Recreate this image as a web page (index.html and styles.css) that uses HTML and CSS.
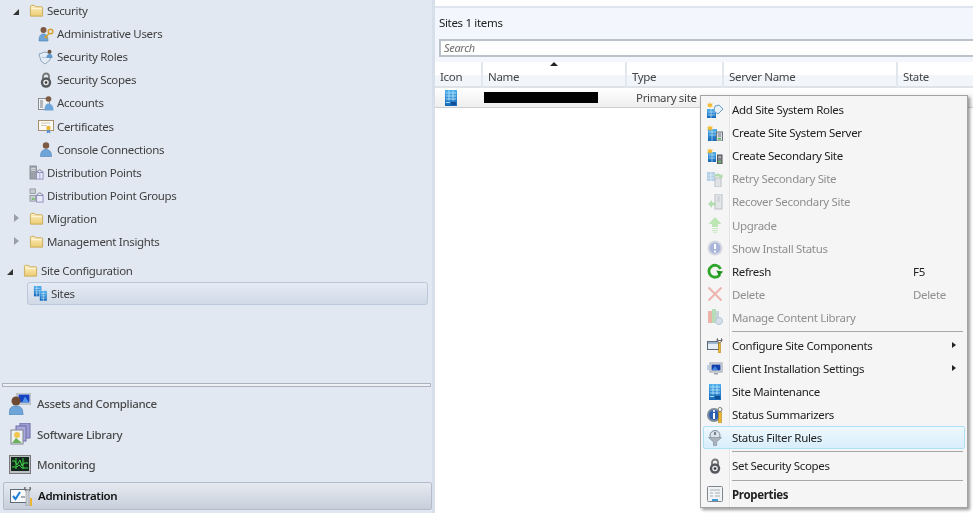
FILE: index.html
```html
<!DOCTYPE html>
<html lang="en">
<head>
    <meta charset="UTF-8">
    <title>Sites - Administration</title>
    <link rel="stylesheet" href="styles.css">
</head>
<body>
    <svg class="sprite" width="0" height="0" aria-hidden="true">
        <defs>
            <linearGradient id="folderFill" x1="0" y1="0" x2="0" y2="1">
                <stop offset="0" stop-color="#fdf0c0"/>
                <stop offset="1" stop-color="#eccb72"/>
            </linearGradient>
            <linearGradient id="blueFill" x1="0" y1="0" x2="0" y2="1">
                <stop offset="0" stop-color="#4fb0ee"/>
                <stop offset="1" stop-color="#1668b8"/>
            </linearGradient>

            <symbol id="i-folder" viewBox="0 0 16 16">
                <path d="M1.5 14V3.5q0-1 1-1h3.5l1 1.5h6.500q1 0 1 1V14z" fill="url(#folderFill)" stroke="#c9ac5e"/>
                <path d="M2.500 6h11" stroke="#fff8df"/>
            </symbol>
            <symbol id="i-user" viewBox="0 0 16 16">
                <circle cx="8" cy="4.500" r="3.200" fill="#7d5a44"/>
                <path d="M2.500 15.500c0-5 2-7 5.500-7s5.500 2 5.500 7z" fill="#6ea5d8" stroke="#4b7fb2" stroke-width=".6"/>
            </symbol>
            <symbol id="i-admin" viewBox="0 0 16 16">
                <circle cx="5.500" cy="4" r="3" fill="#7d5a44"/>
                <path d="M1 15c0-5 1.500-7 4.500-7s4.500 2 4.500 7z" fill="#6ea5d8" stroke="#4b7fb2" stroke-width=".6"/>
                <circle cx="12.500" cy="5.500" r="2.300" fill="none" stroke="#d9a02c" stroke-width="1.500"/>
                <path d="M11 7.500l-4.500 4.500M8 11l1.500 1.500" stroke="#d9a02c" stroke-width="1.500"/>
            </symbol>
            <symbol id="i-roles" viewBox="0 0 16 16">
                <path d="M1 5l6-2 6 2-1 6-5 4-4-3z" fill="#e4edf6" stroke="#8fa6bd"/>
                <path d="M4 8l3 1 4-3" fill="none" stroke="#a9c3dc"/>
                <circle cx="11.500" cy="2.800" r="2" fill="#6b5140"/>
                <path d="M8.500 9c0-3 1.200-4 3-4s3 1 3 4z" fill="#5f97cc"/>
            </symbol>
            <symbol id="i-lock" viewBox="0 0 16 16">
                <path d="M5 7V4.500a3 3 0 0 1 6 0V7" fill="none" stroke="#777" stroke-width="1.800"/>
                <circle cx="8" cy="10.500" r="5.200" fill="#55585c"/>
                <circle cx="8" cy="10.500" r="2.800" fill="#e8e8e8"/>
                <circle cx="8" cy="10.500" r="1.300" fill="#333"/>
            </symbol>
            <symbol id="i-accounts" viewBox="0 0 16 16">
                <rect x=".5" y="3.500" width="11" height="11" fill="#eef0f2" stroke="#8a8f96"/>
                <path d="M2 6h3M2 8h3M2 10h3M2 12h3" stroke="#7a8087"/>
                <circle cx="10.500" cy="4" r="2.800" fill="#7d5a44"/>
                <path d="M6.500 15.500c0-5 1.500-7 4-7s5 2 5 7z" fill="#6ea5d8"/>
            </symbol>
            <symbol id="i-cert" viewBox="0 0 16 16">
                <rect x=".5" y="2.500" width="15" height="10" fill="#fbfaf4" stroke="#a58f6c"/>
                <path d="M3 5h9M3 7.500h6" stroke="#cfc8b4"/>
                <path d="M9.500 11.500l-1 4 2-1 2 1-1-4z" fill="#4f8fd6"/>
                <circle cx="10.500" cy="10" r="2.200" fill="#e8b637"/>
            </symbol>
            <symbol id="i-dp" viewBox="0 0 16 16">
                <rect x="1" y="1" width="7" height="14" fill="#9aa1a8" stroke="#6f767d" stroke-width=".6"/>
                <path d="M2 3.500h5M2 5.500h5" stroke="#e8ecef"/>
                <rect x="8" y="8" width="7" height="7" fill="#e8e9f8" stroke="#8f8fc0"/>
                <path d="M8 7.500l3.500-2.500 3.500 2.500" fill="none" stroke="#7a7f8c"/>
                <path d="M11.500 8v7" stroke="#a9a9d6"/>
            </symbol>
            <symbol id="i-dpg" viewBox="0 0 16 16">
                <rect x="1" y="1" width="6" height="5" fill="#c7ccd1" stroke="#6f767d" stroke-width=".6"/>
                <rect x="1" y="8" width="6" height="6" fill="#c7ccd1" stroke="#6f767d" stroke-width=".6"/>
                <rect x="3" y="11" width="3" height="1.500" fill="#5bc04b"/>
                <rect x="8" y="8" width="7" height="7" fill="#e8e9f8" stroke="#8f8fc0"/>
                <path d="M8 7.500l3.500-2.500 3.500 2.500" fill="none" stroke="#7a7f8c"/>
            </symbol>
            <symbol id="i-sites" viewBox="0 0 16 16">
                <rect x="1" y="0" width="8" height="11" fill="url(#blueFill)"/>
                <rect x="7" y="5" width="8" height="11" fill="url(#blueFill)" stroke="#d6e8f7" stroke-width=".5"/>
                <path d="M2 2.500h6M2 5h4M2 7.500h4M8.500 8h5M8.500 10.500h5M8.500 13h5M4 0v11M11 5v11" stroke="#bfe2f8" stroke-width=".7"/>
            </symbol>
            <symbol id="i-site" viewBox="0 0 16 16">
                <rect x="2" y="0" width="12" height="16" fill="url(#blueFill)"/>
                <path d="M3 3h10M3 6h10M3 9h10M6 .5v10M10 .5v10" stroke="#a8dcf8"/>
                <rect x="8" y="12" width="5" height="3" fill="#0e4f96"/>
                <rect x="3" y="12" width="4" height="1" fill="#a8dcf8"/>
            </symbol>
            <symbol id="i-addroles" viewBox="0 0 16 16">
                <rect x="0" y="7" width="9" height="9" fill="url(#blueFill)"/>
                <path d="M1 10h7M1 13h7M4 7v9" stroke="#bfe2f8" stroke-width=".7"/>
                <path d="M8 4l4-1 4 4-5 5-4-3z" fill="#e6f1fa" stroke="#6c9cc6"/>
                <path d="M3 0l.8 2 2.200-.5-1.200 1.800 1.200 1.700-2.200-.5L3 6.500 2.200 4.500 0 5l1.200-1.700L0 1.500l2.200.5z" fill="#f4b92f"/>
            </symbol>
            <symbol id="i-newserver" viewBox="0 0 16 16">
                <rect x="1" y="4" width="9" height="12" fill="url(#blueFill)"/>
                <path d="M2 7h7M2 10h7M5 4v12" stroke="#bfe2f8" stroke-width=".7"/>
                <rect x="9.500" y="7" width="6" height="9" fill="#d9dde2" stroke="#6f767d"/>
                <path d="M11 9h3M11 11h3" stroke="#6f767d"/>
                <rect x="11" y="13" width="3" height="1.500" fill="#4bb84a"/>
                <path d="M3 0l.8 2 2.200-.5-1.200 1.800 1.200 1.700-2.200-.5L3 6.500 2.200 4.500 0 5l1.200-1.700L0 1.500l2.200.5z" fill="#f4b92f"/>
            </symbol>
            <symbol id="i-secondary" viewBox="0 0 16 16">
                <rect x="1" y="4" width="8" height="10" fill="url(#blueFill)"/>
                <path d="M2 7h6M2 10h6M5 4v10" stroke="#bfe2f8" stroke-width=".7"/>
                <rect x="10.500" y="7" width="4.500" height="9" fill="#7d848b" stroke="#555"/>
                <path d="M11.500 9h2.500" stroke="#ddd"/>
                <rect x="11.500" y="13" width="2.500" height="1.500" fill="#5bd04b"/>
                <path d="M3 0l.8 2 2.200-.5-1.200 1.800 1.200 1.700-2.200-.5L3 6.500 2.200 4.500 0 5l1.200-1.700L0 1.500l2.200.5z" fill="#f4b92f"/>
            </symbol>
            <symbol id="i-retry" viewBox="0 0 16 16">
                <rect x="0" y="1" width="8" height="9" fill="#b5cfe4"/>
                <path d="M1 4h6M1 7h6M4 1v9" stroke="#e4eff8" stroke-width=".7"/>
                <rect x="8" y="7" width="6" height="9" fill="#dfe3e6" stroke="#bcc2c8"/>
                <path d="M7 4q4-3 7 0l1.500-1v4h-4l1-1q-2-1.500-4 0z" fill="#b3dcb0"/>
            </symbol>
            <symbol id="i-recover" viewBox="0 0 16 16">
                <rect x="8" y="0" width="7" height="15" fill="#e3e6e9" stroke="#bcc2c8"/>
                <path d="M10 3h3M10 5h3M10 7h3" stroke="#c3c8cd"/>
                <path d="M1 10l4-4v2.500h4v3H5V14z" fill="#b3dcb0"/>
            </symbol>
            <symbol id="i-upgrade" viewBox="0 0 16 16">
                <path d="M8 0l6.500 7H11v3H5V7H1.500z" fill="#bde6b4"/>
                <path d="M5 11.500h6M5 13.500h6M6 15.300h4" stroke="#c8ebc1"/>
            </symbol>
            <symbol id="i-status" viewBox="0 0 16 16">
                <circle cx="8" cy="8" r="7.500" fill="#d4d7e2"/>
                <circle cx="8" cy="8" r="5.500" fill="#a9b6da"/>
                <path d="M8 4v5" stroke="#fff" stroke-width="2"/>
                <circle cx="8" cy="11.500" r="1.100" fill="#fff"/>
            </symbol>
            <symbol id="i-refresh" viewBox="0 0 16 16">
                <path d="M13 11.500A6 6 0 1 1 13.500 6" fill="none" stroke="#2fa52a" stroke-width="2.800"/>
                <path d="M9 8h7l-3.500 5z" fill="#1f8f1e" transform="rotate(8 12 10)"/>
            </symbol>
            <symbol id="i-delete" viewBox="0 0 16 16">
                <path d="M1.500 1.500l13 13M14.500 1.500l-13 13" stroke="#eeb4ae" stroke-width="2"/>
            </symbol>
            <symbol id="i-library" viewBox="0 0 16 16">
                <rect x="1" y="2" width="4" height="12" fill="#eab4a8"/>
                <rect x="5" y="0" width="4" height="14" fill="#b7dcb8"/>
                <rect x="9" y="2" width="3" height="9" fill="#c8d2dc"/>
                <circle cx="12" cy="12" r="3.500" fill="#d5e0ec" stroke="#b5c4d4"/>
            </symbol>
            <symbol id="i-config" viewBox="0 0 16 16">
                <rect x=".5" y="4.500" width="11" height="8" fill="#e6edf4" stroke="#5e6a76"/>
                <rect x="1" y="5" width="10" height="2" fill="#9db7d1"/>
                <path d="M10.500 1.500a2.500 2.500 0 1 0 4 0v2h-4z" fill="#fff" stroke="#666"/>
                <rect x="11.500" y="6" width="2" height="10" fill="#eeb62e" stroke="#a87c12" stroke-width=".5"/>
            </symbol>
            <symbol id="i-client" viewBox="0 0 16 16">
                <rect x="3" y="2" width="12" height="9" fill="#f0f2f4" stroke="#9aa1a8"/>
                <rect x="4.500" y="3.500" width="9" height="6" fill="#143fa8"/>
                <path d="M5 9l3-4 3 4z" fill="#3d86e0"/>
                <path d="M7 12h4v1.500H7z" fill="#9aa1a8"/>
                <path d="M0 4h2v5H0z" fill="#bcd2e6"/>
            </symbol>
            <symbol id="i-summary" viewBox="0 0 16 16">
                <circle cx="7" cy="8" r="7" fill="#7e8b9c"/>
                <circle cx="7" cy="8" r="5" fill="#2c5fb3"/>
                <path d="M7 6v6" stroke="#fff" stroke-width="2"/>
                <circle cx="7" cy="4" r="1.100" fill="#fff"/>
                <circle cx="13" cy="2.500" r="2" fill="#fff" stroke="#777"/>
                <rect x="11.500" y="5" width="3" height="11" fill="#eeb62e" stroke="#a87c12" stroke-width=".5"/>
            </symbol>
            <symbol id="i-filter" viewBox="0 0 16 16">
                <circle cx="8" cy="5.500" r="5" fill="#dbe3ea" stroke="#7e8a96"/>
                <path d="M8 2v3" stroke="#55606c" stroke-width="1.500"/>
                <path d="M1.500 7.500h13L9.500 12v3.500h-3V12z" fill="#a9b3bd" stroke="#7e8a96" stroke-width=".6"/>
            </symbol>
            <symbol id="i-props" viewBox="0 0 16 16">
                <rect x=".5" y=".5" width="15" height="15" rx="1" fill="#f0f2f4" stroke="#7f868d"/>
                <path d="M3 4h10M3 7h3M8 7h5M3 10h3M8 10h5" stroke="#a8b0b8"/>
                <rect x="5" y="13" width="6" height="2" fill="#3f9bd8"/>
            </symbol>
            <symbol id="i-assets" viewBox="0 0 22 22">
                <rect x="8" y="0" width="14" height="11" fill="#e8eaec" stroke="#9aa1a8"/>
                <rect x="9.500" y="1.500" width="11" height="8" fill="#1542c0"/>
                <path d="M13 9.500l3-6 4 6z" fill="#4f94ea"/>
                <circle cx="7" cy="8" r="4.500" fill="#6e4a32"/>
                <path d="M0 22c0-7 2-9 7-9s7 2 7 9z" fill="#6ea5d8" stroke="#4f82b4" stroke-width=".6"/>
            </symbol>
            <symbol id="i-library-nav" viewBox="0 0 22 22">
                <rect x="11" y="0" width="10" height="15" fill="#9c9cd2" stroke="#6c6ca8"/>
                <rect x="7" y="3" width="10" height="15" fill="#a9a9da" stroke="#6c6ca8"/>
                <rect x="2" y="7" width="12" height="14" fill="#eff0f2" stroke="#7d8590"/>
                <circle cx="8" cy="12" r="3" fill="#f0c64e"/>
                <path d="M3 20l4-5 6 5z" fill="#68b25a"/>
            </symbol>
            <symbol id="i-monitoring" viewBox="0 0 22 22">
                <rect x=".5" y="1.500" width="21" height="18" fill="#bcc0c4" stroke="#777"/>
                <rect x="2" y="3" width="18" height="14" fill="#13281a"/>
                <path d="M3 7h3l2 4 3-5 2 6 2-3h4M3 13h5l2-2 3 3h6M7 4v11M14 4v11" fill="none" stroke="#3fd04a"/>
            </symbol>
            <symbol id="i-admin-nav" viewBox="0 0 22 22">
                <rect x=".5" y="5.500" width="16" height="13" fill="#f6f8fa" stroke="#5e6a76"/>
                <path d="M3 12l2.500 3L10 8" fill="none" stroke="#1c7fd8" stroke-width="2"/>
                <path d="M11 13h4" stroke="#8a939c" stroke-width="1.500"/>
                <path d="M15 3a3 3 0 1 0 5 0v3h-5z" fill="#eceef0" stroke="#6a6f75"/>
                <rect x="16" y="6" width="3" height="16" fill="#cdd1d6" stroke="#7d8288" stroke-width=".5"/>
                <rect x="20" y="14" width="2" height="8" fill="#eeb62e"/>
            </symbol>
        </defs>
    </svg>

    <div class="sidebar">
        <ul class="tree">
            <li class="tree-row level-1"><span class="arrow open"></span><svg class="tree-icon folder"><use href="#i-folder"/></svg>Security</li>
            <li class="tree-row level-2"><svg class="tree-icon"><use href="#i-admin"/></svg>Administrative Users</li>
            <li class="tree-row level-2"><svg class="tree-icon"><use href="#i-roles"/></svg>Security Roles</li>
            <li class="tree-row level-2"><svg class="tree-icon"><use href="#i-lock"/></svg>Security Scopes</li>
            <li class="tree-row level-2"><svg class="tree-icon"><use href="#i-accounts"/></svg>Accounts</li>
            <li class="tree-row level-2"><svg class="tree-icon"><use href="#i-cert"/></svg>Certificates</li>
            <li class="tree-row level-2"><svg class="tree-icon"><use href="#i-user"/></svg>Console Connections</li>
            <li class="tree-row level-1b"><svg class="tree-icon folder"><use href="#i-dp"/></svg>Distribution Points</li>
            <li class="tree-row level-1b"><svg class="tree-icon folder"><use href="#i-dpg"/></svg>Distribution Point Groups</li>
            <li class="tree-row level-1"><span class="arrow closed"></span><svg class="tree-icon folder"><use href="#i-folder"/></svg>Migration</li>
            <li class="tree-row level-1"><span class="arrow closed"></span><svg class="tree-icon folder"><use href="#i-folder"/></svg>Management Insights</li>
            <li class="tree-row level-0"><span class="arrow open"></span><svg class="tree-icon folder"><use href="#i-folder"/></svg>Site Configuration</li>
            <li class="tree-row selected"><svg class="tree-icon folder"><use href="#i-sites"/></svg>Sites</li>
        </ul>

        <div class="nav">
            <div class="nav-grip"></div>
            <div class="nav-row"><svg class="nav-icon"><use href="#i-assets"/></svg>Assets and Compliance</div>
            <div class="nav-row"><svg class="nav-icon"><use href="#i-library-nav"/></svg>Software Library</div>
            <div class="nav-row"><svg class="nav-icon"><use href="#i-monitoring"/></svg>Monitoring</div>
            <div class="nav-row active"><svg class="nav-icon"><use href="#i-admin-nav"/></svg>Administration</div>
        </div>
    </div>

    <div class="content">
        <div class="list-title">Sites 1 items</div>
        <div class="search-band">
            <div class="search-box">Search</div>
        </div>
        <div class="grid-head">
            <div class="col col-icon">Icon</div>
            <div class="col col-name"><span class="sort-mark"></span>Name</div>
            <div class="col col-type">Type</div>
            <div class="col col-server">Server Name</div>
            <div class="col col-state">State</div>
        </div>
        <div class="grid-row">
            <div class="cell col-icon"><svg class="site-icon"><use href="#i-site"/></svg></div>
            <div class="cell col-name"><span class="redacted"></span></div>
            <div class="cell col-type type-cell">Primary site</div>
        </div>
    </div>

    <div class="menu">
        <div class="menu-item"><svg class="menu-icon"><use href="#i-addroles"/></svg><span>Add Site System Roles</span></div>
        <div class="menu-item"><svg class="menu-icon"><use href="#i-newserver"/></svg><span>Create Site System Server</span></div>
        <div class="menu-item"><svg class="menu-icon"><use href="#i-secondary"/></svg><span>Create Secondary Site</span></div>
        <div class="menu-item disabled"><svg class="menu-icon"><use href="#i-retry"/></svg><span>Retry Secondary Site</span></div>
        <div class="menu-item disabled"><svg class="menu-icon"><use href="#i-recover"/></svg><span>Recover Secondary Site</span></div>
        <div class="menu-item disabled"><svg class="menu-icon"><use href="#i-upgrade"/></svg><span>Upgrade</span></div>
        <div class="menu-item disabled"><svg class="menu-icon"><use href="#i-status"/></svg><span>Show Install Status</span></div>
        <div class="menu-item"><svg class="menu-icon"><use href="#i-refresh"/></svg><span>Refresh</span><span class="shortcut">F5</span></div>
        <div class="menu-item disabled"><svg class="menu-icon"><use href="#i-delete"/></svg><span>Delete</span><span class="shortcut">Delete</span></div>
        <div class="menu-item disabled"><svg class="menu-icon"><use href="#i-library"/></svg><span>Manage Content Library</span></div>
        <div class="menu-sep"></div>
        <div class="menu-item"><svg class="menu-icon"><use href="#i-config"/></svg><span>Configure Site Components</span><span class="submenu"></span></div>
        <div class="menu-item"><svg class="menu-icon"><use href="#i-client"/></svg><span>Client Installation Settings</span><span class="submenu"></span></div>
        <div class="menu-item"><svg class="menu-icon"><use href="#i-site"/></svg><span>Site Maintenance</span></div>
        <div class="menu-item"><svg class="menu-icon"><use href="#i-summary"/></svg><span>Status Summarizers</span></div>
        <div class="menu-item hover"><svg class="menu-icon"><use href="#i-filter"/></svg><span>Status Filter Rules</span></div>
        <div class="menu-sep"></div>
        <div class="menu-item"><svg class="menu-icon"><use href="#i-lock"/></svg><span>Set Security Scopes</span></div>
        <div class="menu-sep"></div>
        <div class="menu-item strong"><svg class="menu-icon"><use href="#i-props"/></svg><span>Properties</span></div>
    </div>
</body>
</html>
```

FILE: styles.css
```css
* {
    box-sizing: border-box;
    margin: 0;
    padding: 0;
}

html, body {
    height: 100%;
    overflow: hidden;
    font-family: "Noto Sans", "Open Sans", sans-serif;
    font-size: 11.5px;
    letter-spacing: -0.33px;
    color: #3f3f3f;
    background-color: #ffffff;
}

body {
    display: flex;
    filter: blur(0.3px);
}

.sprite {
    position: absolute;
}

/* Left side */
.sidebar {
    width: 435px;
    height: 513px;
    flex-shrink: 0;
    display: flex;
    flex-direction: column;
    justify-content: space-between;
    background-color: #e1e8f2;
    border-right: 3px solid #d7dfea;
}

.tree {
    list-style: none;
    margin-top: -1px;
}

.tree-row {
    height: 23.1px;
    display: flex;
    align-items: center;
}

.level-0 {
    padding-left: 6px;
    margin-top: 6px;
}

.level-1 {
    padding-left: 12px;
}

.level-1b {
    padding-left: 29px;
}

.level-2 {
    padding-left: 38px;
}

.arrow {
    width: 17px;
    height: 8px;
    flex-shrink: 0;
    position: relative;
}

.arrow::before {
    content: "";
    position: absolute;
    left: 1px;
    top: 0;
    border-style: solid;
}

.arrow.open::before {
    top: 2px;
    border-width: 0 0 6px 6px;
    border-color: transparent transparent #333 transparent;
}

.arrow.closed::before {
    left: 2px;
    border-width: 4px 0 4px 5px;
    border-color: transparent transparent transparent #9a9fa6;
}

.tree-icon {
    width: 16px;
    height: 16px;
    margin-right: 3px;
    flex-shrink: 0;
}

.tree-icon.folder {
    width: 15px;
    height: 15px;
}

.selected {
    margin-left: 27px;
    margin-right: 4px;
    padding-left: 5px;
    border: 1px solid #bcc8d9;
    border-radius: 3px;
    background: linear-gradient(#e6ecf5, #d0d9e6);
}

.nav {
    padding: 0 0 3px 2px;
}

.nav-grip {
    height: 4px;
    margin-right: 1px;
    margin-bottom: 1px;
    border: 1px solid #aab3bf;
    background-color: #edf0f5;
}

.nav-row {
    height: 30.6px;
    display: flex;
    align-items: center;
    padding-left: 7px;
    font-weight: 500;
    color: #4a4a4a;
}

.nav-icon {
    width: 22px;
    height: 22px;
    margin-right: 6px;
    flex-shrink: 0;
}

.active {
    height: 28px;
    margin-top: 2px;
    margin-left: 1px;
    padding-left: 6px;
    padding-bottom: 2px;
    border: 1px solid #b3bccb;
    border-radius: 2px;
    background: linear-gradient(#e6eaf1, #c7cfdb);
    font-weight: 600;
    color: #111;
}

/* Right side */
.content {
    flex: 1;
    min-width: 0;
    margin-top: 6px;
    border-top: 2px solid #dfe5ef;
}

.list-title {
    height: 28px;
    padding-left: 4px;
    display: flex;
    align-items: center;
    background-color: #f3f6fc;
    color: #222;
}

.search-band {
    height: 26px;
    padding: 3px 0 0 4px;
    background-color: #f3f6fc;
}

.search-box {
    height: 18px;
    padding-left: 3px;
    border: 2px solid #bcc2c9;
    border-right: 0;
    background-color: #ffffff;
    font-style: italic;
    font-size: 11px;
    line-height: 14px;
    color: #6d6d6d;
}

.grid-head {
    height: 26px;
    display: flex;
    background: linear-gradient(#ffffff 50%, #f2f5fa 50%, #f2f5fa 92%, #dfe3e8 92%);
}

.col {
    height: 100%;
    padding: 7px 0 0 5px;
    border-right: 2px solid #e2e7ee;
    color: #444;
    position: relative;
}

.col-icon {
    width: 48px;
}

.col-name {
    width: 144px;
}

.col-type {
    width: 97px;
}

.col-server {
    width: 174px;
}

.col-state {
    flex: 1;
    border-right: 0;
}

.sort-mark {
    position: absolute;
    left: 67px;
    top: 0;
    border-style: solid;
    border-width: 0 4px 4px 4px;
    border-color: transparent transparent #222 transparent;
}

.grid-row {
    height: 20px;
    display: flex;
    border-bottom: 1px solid #cfcfcf;
    background: linear-gradient(#ffffff, #eeeeee);
}

.cell {
    display: flex;
    align-items: center;
}

.site-icon {
    width: 16px;
    height: 16px;
    margin-left: 8px;
}

.redacted {
    width: 114px;
    height: 11px;
    margin-left: 1px;
    background-color: #000;
}

.type-cell {
    padding-left: 9px;
    color: #444;
}

/* Context menu */
.menu {
    position: absolute;
    left: 700px;
    top: 95px;
    width: 268px;
    height: 413px;
    padding-top: 2px;
    border: 1px solid #a3a3a3;
    box-shadow: 2px 2px 3px rgba(0, 0, 0, 0.4);
    background: linear-gradient(to right, #f5f5f5 28px, #e3e3e3 28px, #e3e3e3 29px, #ffffff 29px, #ffffff 30px, #f5f5f5 30px);
    color: #222;
}

.menu-item {
    height: 23.1px;
    display: flex;
    align-items: center;
    padding-left: 6px;
    position: relative;
}

.menu-icon {
    width: 16px;
    height: 16px;
    margin-right: 9px;
    flex-shrink: 0;
}

.disabled {
    color: #8f8f8f;
}

.strong {
    font-weight: 700;
}

.hover {
    margin: 0 2px;
    padding-left: 3px;
    border: 1px solid #aee0f7;
    border-radius: 2px;
    background: linear-gradient(#eef8fe, #d8eefb);
}

.shortcut {
    position: absolute;
    left: 212px;
}

.submenu {
    position: absolute;
    left: 251px;
    top: 8px;
    border-style: solid;
    border-width: 3.5px 0 3.5px 4px;
    border-color: transparent transparent transparent #222;
}

.menu-sep {
    height: 5px;
    margin-left: 31px;
    margin-right: 4px;
    display: flex;
    align-items: center;
}

.menu-sep::before {
    content: "";
    width: 100%;
    height: 1px;
    background-color: #a8a8a8;
}
```
